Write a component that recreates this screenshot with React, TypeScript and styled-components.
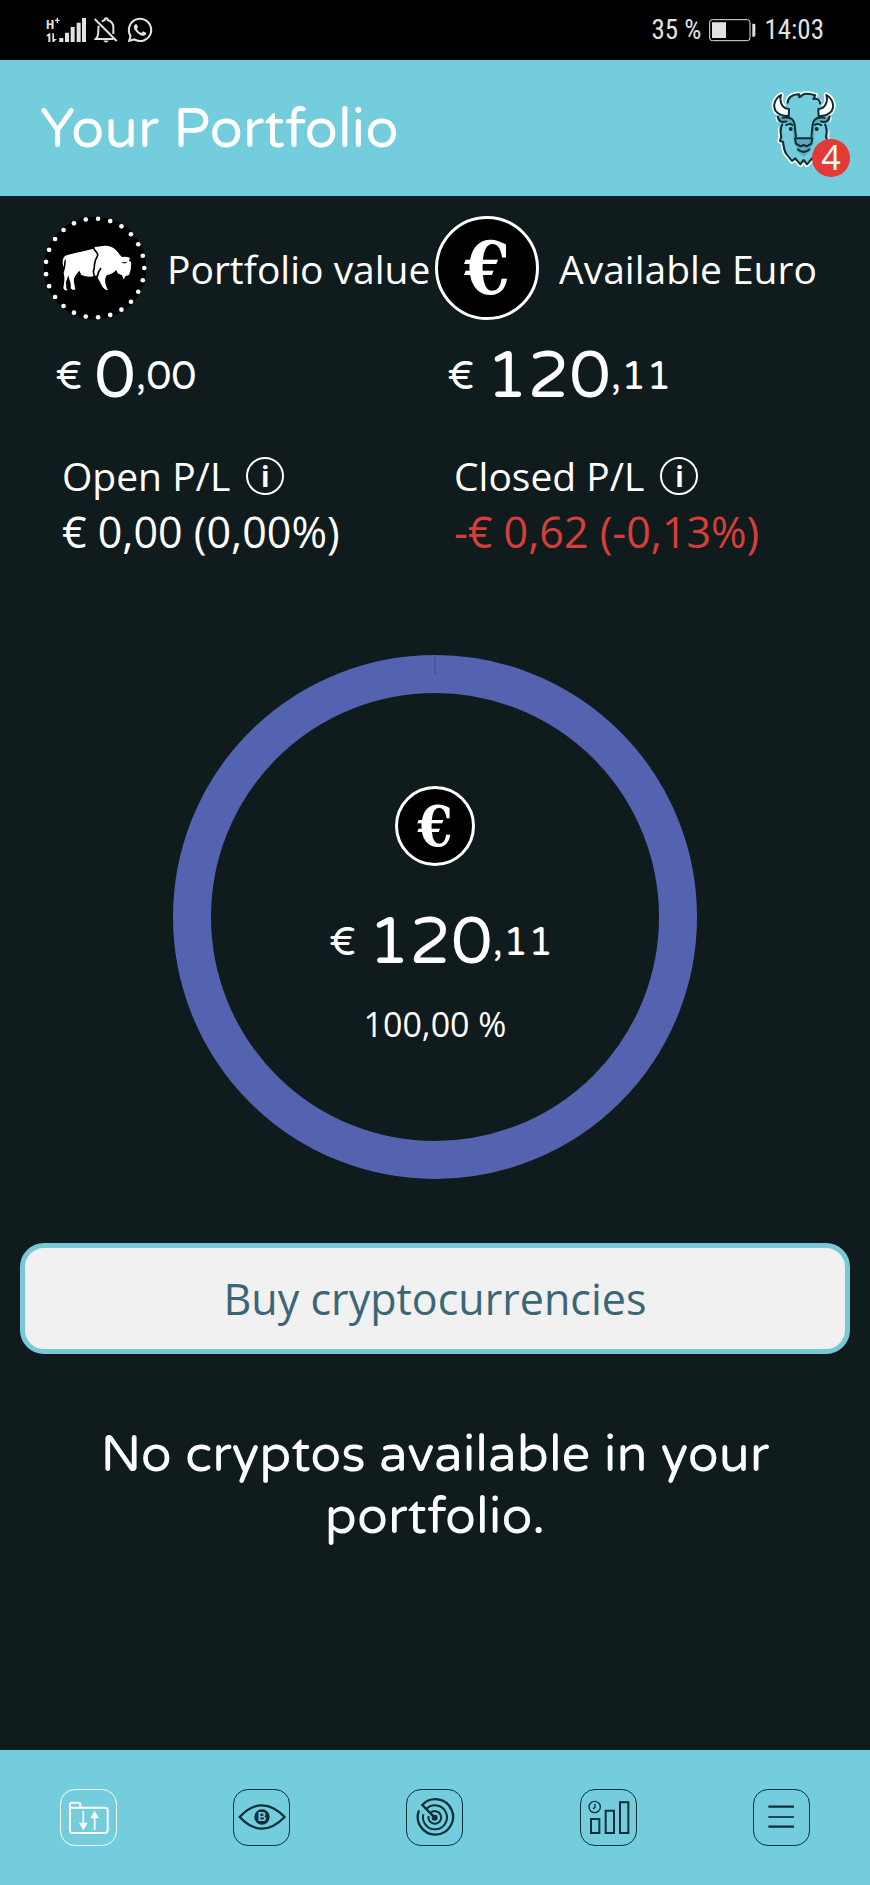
import React from 'react';
import { FaWhatsapp } from 'react-icons/fa';
import styled, { createGlobalStyle } from 'styled-components';

const HEADING_FONT = `'Varela Round', 'Noto Sans', sans-serif`;

const App = () => (
  <Page>
    <GlobalStyle />
    <StatusBar>
      <StatusGroup>
        <SignalIcon />
        <BellOffIcon />
        <FaWhatsapp size={28} />
      </StatusGroup>
      <StatusGroup>
        <span>35 %</span>
        <BatteryIcon />
        <span>14:03</span>
      </StatusGroup>
    </StatusBar>

    <Header>
      <Title>Your Portfolio</Title>
      <Notifications aria-label="Notifications">
        <BisonHead />
        <Badge>4</Badge>
      </Notifications>
    </Header>

    <Content>
      <Summary>
        <Account
          icon={<BisonCoin />}
          label="Portfolio value"
          whole="0"
          cents="00"
          plLabel="Open P/L"
          plValue="€ 0,00 (0,00%)"
        />
        <Account
          icon={<Coin $size={104}>€</Coin>}
          label="Available Euro"
          whole="120"
          cents="11"
          plLabel="Closed P/L"
          plValue="-€ 0,62 (-0,13%)"
          loss
        />
      </Summary>

      <Chart>
        <Ring viewBox="0 0 524 524" aria-hidden="true">
          <circle cx="262" cy="262" r="243" fill="none" stroke="#5363b0" strokeWidth="38" />
          <path d="M262 1v18" stroke="#3c4a90" />
        </Ring>
        <ChartLabel>
          <Coin $size={80}>€</Coin>
          <ChartAmount>
            <Amount whole="120" cents="11" />
          </ChartAmount>
          <Percentage>100,00 %</Percentage>
        </ChartLabel>
      </Chart>

      <BuyButton>Buy cryptocurrencies</BuyButton>
      <EmptyText>No cryptos available in your portfolio.</EmptyText>
    </Content>

    <Nav>
      {navItems.map(({ label, icon }, key) => (
        <NavLink key={label} href="#" aria-label={label} $active={key === 0}>
          <svg viewBox="3 3 165 165" fill="none" stroke="currentColor">
            {icon}
          </svg>
        </NavLink>
      ))}
    </Nav>
  </Page>
);

export default App;

const Account = (props: {
  icon: React.ReactNode;
  label: string;
  whole: string;
  cents: string;
  plLabel: string;
  plValue: string;
  loss?: boolean;
}) => (
  <section>
    <AccountHead>
      {props.icon}
      <span>{props.label}</span>
    </AccountHead>
    <AccountAmount>
      <Amount whole={props.whole} cents={props.cents} />
    </AccountAmount>
    <ProfitLoss>
      <ProfitLabel>
        {props.plLabel}
        <InfoButton aria-label={`About ${props.plLabel}`}>i</InfoButton>
      </ProfitLabel>
      <ProfitValue $loss={props.loss}>{props.plValue}</ProfitValue>
    </ProfitLoss>
  </section>
);

const Amount = ({ whole, cents }: { whole: string; cents: string }) => (
  <AmountRow>
    <span>€</span>
    <div>
      <Whole>{whole}</Whole>
      <span>,{cents}</span>
    </div>
  </AmountRow>
);

const SignalIcon = () => (
  <svg width="40" height="26" viewBox="0 0 120 78" fill="currentColor">
    <text x="0" y="35" fontSize="40" fontFamily="Roboto Condensed, Roboto" fontWeight="bold">
      H
    </text>
    <path d="M27 8h5V2h4v6h5v4h-5v6h-4v-6h-5zM0 57l9-8h4v26H7V58H0zM19 49h5v17h9l-10 9h-4z" />
    <path d="M40 63h12v12H40zM57 47h12v28H57zM74 30h12v45H74zM92 17h12v58H92zM108 3h12v72h-12z" />
  </svg>
);

const BellOffIcon = () => (
  <svg width="24" height="26" viewBox="0 0 72 78" fill="none" stroke="currentColor">
    <path
      d="M2 6l66 66M14 26c-2 8 1 23-4 34l-5 6h53M24 14c3-3 5-4 8-5 0-7 9-7 9 0 13 4 18 13 17 26v16"
      strokeWidth="6"
    />
    <path d="M29 71h14c-2 6-12 6-14 0z" fill="currentColor" />
  </svg>
);

const BatteryIcon = () => (
  <svg width="47" height="24" viewBox="0 0 141 72" fill="currentColor">
    <rect x="2" y="5" width="121" height="63" rx="8" fill="none" stroke="currentColor" strokeWidth="3" />
    <path d="M9 13h42v47H9zM130 17h5q4 0 4 4v31q0 4-4 4h-5z" />
  </svg>
);

const HORN = 'M63 40C44 51 37 73 48 89 56 99 71 103 86 104L87 82C68 81 57 63 63 40z';
const MANE = 'M68 126C58 144 62 154 64 165L60 178 69 180C72 200 73 214 84 223L96 238 106 230 121 248 131 234';

const BisonHead = () => (
  <svg width="68" height="77" viewBox="30 25 204 231" fill="none" strokeLinejoin="round">
    <g stroke="#fff" strokeWidth="16">
      <path d={`${HORN}${MANE}`} />
      <path d={`${HORN}${MANE}`} transform="matrix(-1 0 0 1 262 0)" />
      <path d="M82 66C83 48 97 37 117 38L118 47 132 37C143 35 157 39 166 41L160 52 182 63M54 105Q56 123 77 122M208 105Q206 123 185 122" />
    </g>
    <path
      d="M82 66C83 48 97 37 131 37 166 40 180 55 182 70L210 110 202 180Q188 225 164 235L131 245 98 235Q73 220 62 175L52 110z"
      fill="#74cddd"
    />
    <path
      d="M54 105l35 3Q105 125 105 170L120 188H142L157 170Q157 125 173 108l35-3-5 15-22 8-10 62-40 36-40-36-10-62-22-8z"
      fill="#5ba9be"
    />
    <path
      d="M65 125q25-10 33 10l4 50 10 20-20 17-17-15-6-30zM197 125q-25-10-33 10l-4 50-10 20 20 17 17-15 6-30z"
      fill="#74cddd"
    />
    <g stroke="#122c35" strokeWidth="6">
      <path d="M82 66C83 48 97 37 117 38L118 47 132 37C143 35 157 39 166 41L160 52C171 49 181 54 180 68" />
      <path d={HORN} fill="#fff" />
      <path d={HORN} fill="#fff" transform="matrix(-1 0 0 1 262 0)" />
      <path d={MANE} />
      <path d={MANE} transform="matrix(-1 0 0 1 262 0)" />
      <path d="M53 102C54 118 64 124 81 119M66 108C86 106 101 107 104 130L108 166M209 102C208 118 198 124 181 119M196 108C176 106 161 107 158 130L154 166" />
      <path d="M76 132Q88 123 99 131M186 132Q174 123 163 131" />
      <path d="M105 170H157L154 186 140 194 131 190 122 194 108 186z" fill="#5ba9be" />
      <path d="M112 202Q131 219 150 202" />
    </g>
    <circle cx="92" cy="142" r="6" fill="#122c35" />
    <circle cx="170" cy="142" r="6" fill="#122c35" />
  </svg>
);

const DOTS = 25;

const BisonCoin = () => (
  <svg width="104" height="104" viewBox="9 14 312 312" fill="#fff">
    <circle cx="165" cy="170" r="154" fill="#000" />
    {Array.from({ length: DOTS }, (_, key) => {
      const angle = (key / DOTS) * Math.PI * 2;
      return (
        <circle key={`dot_${key}`} cx={165 + 148 * Math.cos(angle)} cy={170 + 148 * Math.sin(angle)} r="7" />
      );
    })}
    <path d="M75 134C90 126 130 121 160 112L165 107Q178 105 189 104C214 100 230 116 239 130L246 137Q259 134 270 140L267 149 273 151Q275 174 267 191L257 194 251 204 246 192 233 186 229 176Q216 190 201 191C191 204 196 222 204 237 186 234 184 216 175 203L171 192 160 195Q143 198 124 191L118 178C108 190 100 198 102 213L106 235H98L92 231C95 215 86 203 85 192L78 211 79 231 83 237H74L70 231C73 210 75 199 71 184 76 172 78 156 77 142L73 149 71 168C67 157 66 143 75 134z" />
    <path
      d="M161 110C163 121 175 122 173 132 172 139 165 143 165 153 161 165 165 169 160 181L163 196M183 170Q174 180 172 197"
      fill="none"
      stroke="#000"
      strokeWidth="5"
    />
    <path d="M243 151q9 3 20 0l-5 5h-9z" fill="#000" />
  </svg>
);

const navItems = [
  {
    label: 'Portfolio',
    icon: (
      <>
        <path
          d="M30 58V46Q30 41 35 41H56Q61 41 61 46V53M30 56H135Q143 56 143 63V124Q143 132 135 132H38Q30 132 30 124z"
          strokeWidth="6"
        />
        <path d="M70 66V104M104 122V86" strokeWidth="5" />
        <path d="M57 101H83L70 124zM91 88H117L104 65z" fill="currentColor" stroke="none" />
      </>
    ),
  },
  {
    label: 'Watchlist',
    icon: (
      <>
        <path d="M20 84Q52 49 87 49T155 84Q121 119 87 119T20 84z" strokeWidth="7" strokeLinejoin="round" />
        <circle cx="87" cy="84" r="23" fill="currentColor" stroke="none" />
        <text
          x="87"
          y="97"
          fill="#74cddd"
          stroke="none"
          fontSize="36"
          fontWeight="bold"
          fontFamily="Liberation Sans"
          textAnchor="middle"
        >
          B
        </text>
      </>
    ),
  },
  {
    label: 'Radar',
    icon: (
      <>
        <path d="M86 86L49 48A53 53 0 1 1 39 64" strokeWidth="7" />
        <path d="M61 60A36 36 0 1 1 52 76M73 72A19 19 0 1 1 68 81" strokeWidth="6" />
        <circle cx="86" cy="86" r="9" fill="currentColor" stroke="none" />
      </>
    ),
  },
  {
    label: 'Statistics',
    icon: (
      <>
        <path d="M33 90H58V132H33zM77 65H102V132H77zM120 40H145V132H120z" strokeWidth="6" />
        <circle cx="44" cy="54" r="17" strokeWidth="4" />
        <path d="M45 44V55L39 60" strokeWidth="4" />
      </>
    ),
  },
  {
    label: 'Menu',
    icon: (
      <>
        <path d="M46 53H123M46 113H123" strokeWidth="7" />
        <path d="M46 84H123" strokeWidth="5" />
      </>
    ),
  },
];

const GlobalStyle = createGlobalStyle`
  * {
    box-sizing: border-box;
  }

  body {
    margin: 0;
    background-color: #101b1d;
    color: #fff;
    font-family: 'Open Sans', 'Noto Sans', sans-serif;
  }

  button {
    font-family: inherit;
    color: inherit;
    cursor: pointer;
  }

  svg {
    display: block;
    flex-shrink: 0;
  }
`;

const Page = styled.div`
  display: flex;
  flex-direction: column;
  min-height: 100vh;
`;

const StatusBar = styled.div`
  display: flex;
  justify-content: space-between;
  align-items: center;
  height: 60px;
  padding: 0 46px;
  background-color: #000;
  color: #e2e2e2;
  font-family: 'Roboto Condensed', Roboto, sans-serif;
  font-size: 27px;
`;

const StatusGroup = styled.div`
  display: flex;
  align-items: center;
  gap: 8px;
`;

const Header = styled.header`
  display: flex;
  justify-content: space-between;
  align-items: center;
  height: 136px;
  padding: 0 32px 0 40px;
  background-color: #74cddd;
`;

const Title = styled.h1`
  margin: 0;
  padding-top: 4px;
  font-family: ${HEADING_FONT};
  font-size: 55px;
  font-weight: 400;
`;

const Notifications = styled.button`
  position: relative;
  padding: 0;
  border: none;
  background: none;
`;

const Badge = styled.span`
  position: absolute;
  right: -12px;
  bottom: -10px;
  width: 38px;
  height: 38px;
  border-radius: 50%;
  background-color: #e33a35;
  color: #fff;
  font-size: 34px;
  line-height: 36px;
  text-align: center;
`;

const Content = styled.main`
  flex: 1;
  display: flex;
  flex-direction: column;
  padding: 20px 20px 0;
`;

const Summary = styled.div`
  display: grid;
  grid-template-columns: repeat(2, minmax(0, 1fr));
  padding: 0 23px;
`;

const AccountHead = styled.div`
  display: flex;
  align-items: center;
  gap: 20px;
  font-size: 39px;
  white-space: nowrap;
`;

const Coin = styled.span<{ $size: number }>`
  display: flex;
  flex-shrink: 0;
  align-items: center;
  justify-content: center;
  width: ${({ $size }) => $size}px;
  height: ${({ $size }) => $size}px;
  border: 3px solid #fff;
  border-radius: 50%;
  background-color: #000;
  color: #fff;
  font-family: 'DejaVu Serif Condensed', 'DejaVu Serif', serif;
  font-size: ${({ $size }) => Math.round($size * 0.7)}px;
  font-weight: bold;
  line-height: 1;
`;

const AccountAmount = styled.div`
  padding: 20px 12px;
`;

const AmountRow = styled.div`
  display: flex;
  align-items: center;
  gap: 12px;
  font-family: ${HEADING_FONT};
  font-size: 40px;
  line-height: 72px;

  div {
    display: flex;
    align-items: center;
  }
`;

const Whole = styled.span`
  font-size: 66px;
`;

const ProfitLoss = styled.div`
  padding: 16px 19px 0;
`;

const ProfitLabel = styled.div`
  display: flex;
  align-items: center;
  gap: 16px;
  font-size: 39px;
  line-height: 56px;
`;

const InfoButton = styled.button`
  width: 38px;
  height: 38px;
  padding: 0;
  border: 2px solid #fff;
  border-radius: 50%;
  background: none;
  font-size: 28px;
  font-weight: bold;
  line-height: 32px;
`;

const ProfitValue = styled.div<{ $loss?: boolean }>`
  color: ${({ $loss }) => ($loss ? '#d63f39' : '#fff')};
  font-size: 43px;
  line-height: 56px;
`;

const Chart = styled.div`
  display: grid;
  justify-items: center;
  align-items: center;
  margin-top: 95px;

  > * {
    grid-area: 1 / 1;
  }
`;

const Ring = styled.svg`
  width: 524px;
  max-width: 100%;
`;

const ChartLabel = styled.div`
  display: flex;
  flex-direction: column;
  align-items: center;
`;

const ChartAmount = styled.div`
  padding: 40px 0 22px 12px;
`;

const Percentage = styled.div`
  font-size: 34px;
  line-height: 48px;
`;

const BuyButton = styled.button`
  height: 111px;
  margin-top: 64px;
  border: 5px solid #78c8d6;
  border-radius: 24px;
  background-color: #f1f1f1;
  color: #3b6675;
  font-size: 43px;
`;

const EmptyText = styled.p`
  margin: 70px 64px;
  font-family: ${HEADING_FONT};
  font-size: 51px;
  line-height: 62px;
  text-align: center;
`;

const Nav = styled.nav`
  display: grid;
  grid-template-columns: repeat(5, 1fr);
  align-items: center;
  justify-items: center;
  height: 135px;
  padding: 0 2px;
  background-color: #74cddd;
`;

const NavLink = styled.a<{ $active: boolean }>`
  width: 57px;
  height: 57px;
  border: 1px solid currentColor;
  border-radius: 15px;
  color: ${({ $active }) => ($active ? '#fff' : '#0c2f3a')};
`;
